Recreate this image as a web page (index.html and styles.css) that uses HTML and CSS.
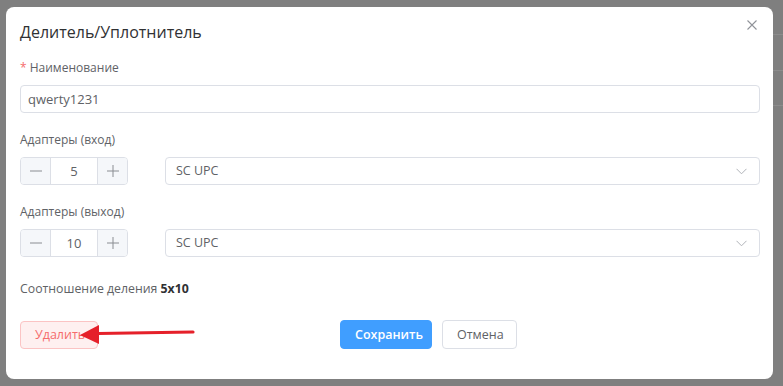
FILE: index.html
```html
<!DOCTYPE html>
<html lang="ru">
<head>
<meta charset="utf-8">
<link rel="stylesheet" href="styles.css">
</head>
<body>
<div class="backdrop">
  <div class="bg-line l1"></div>
  <div class="bg-line l2"></div>
  <div class="bg-line l3"></div>
  <div class="modal">
    <div class="header">
      <span class="title">Делитель/Уплотнитель</span>
      <svg class="close" width="10" height="10" viewBox="0 0 10 10"><path d="M0.5 0.5L9.5 9.5M9.5 0.5L0.5 9.5" stroke="#909399" stroke-width="1.1"/></svg>
    </div>
    <div class="field">
      <div class="label"><span class="req">*</span> Наименование</div>
      <div class="input">qwerty1231</div>
    </div>
    <div class="field">
      <div class="label">Адаптеры (вход)</div>
      <div class="row">
        <div class="number">
          <span class="step minus"><svg width="12" height="12" viewBox="0 0 12 12"><path d="M0 6H12" stroke="#8a8d92" stroke-width="1"/></svg></span>
          <span class="value">5</span>
          <span class="step plus"><svg width="12" height="12" viewBox="0 0 12 12"><path d="M0 6H12M6 0V12" stroke="#8a8d92" stroke-width="1"/></svg></span>
        </div>
        <div class="select">SC UPC
          <svg class="arrow" width="11" height="7" viewBox="0 0 11 7"><path d="M0.5 0.8L5.5 5.8L10.5 0.8" fill="none" stroke="#b0b3b8" stroke-width="1"/></svg>
        </div>
      </div>
    </div>
    <div class="field">
      <div class="label">Адаптеры (выход)</div>
      <div class="row">
        <div class="number">
          <span class="step minus"><svg width="12" height="12" viewBox="0 0 12 12"><path d="M0 6H12" stroke="#8a8d92" stroke-width="1"/></svg></span>
          <span class="value">10</span>
          <span class="step plus"><svg width="12" height="12" viewBox="0 0 12 12"><path d="M0 6H12M6 0V12" stroke="#8a8d92" stroke-width="1"/></svg></span>
        </div>
        <div class="select">SC UPC
          <svg class="arrow" width="11" height="7" viewBox="0 0 11 7"><path d="M0.5 0.8L5.5 5.8L10.5 0.8" fill="none" stroke="#b0b3b8" stroke-width="1"/></svg>
        </div>
      </div>
    </div>
    <div class="ratio">Соотношение деления <b>5x10</b></div>
    <div class="footer">
      <button class="btn danger">Удалить</button>
      <div class="actions">
        <button class="btn primary">Сохранить</button>
        <button class="btn plain">Отмена</button>
      </div>
    </div>
    <svg class="annot" width="130" height="30" viewBox="0 0 130 30"><path d="M20 13.5L115 12" stroke="#e5202a" stroke-width="3.2" stroke-linecap="round"/><path d="M2 15L21 5L21 24Z" fill="#e5202a"/></svg>
  </div>
</div>
</body>
</html>
```
FILE: styles.css
```css
html, body {
  margin: 0;
  padding: 0;
}
body {
  background: #7f7f7f;
  font-family: "Open Sans", "Noto Sans", sans-serif;
  color: #606266;
}
.backdrop {
  position: relative;
  width: 783px;
  height: 386px;
  padding: 7px 10px 7px 6px;
  box-sizing: border-box;
}
.bg-line {
  position: absolute;
  right: 0;
  width: 10px;
  height: 1px;
  background: #8c8c8c;
}
.l1 { top: 34px; }
.l2 { top: 70px; }
.l3 { top: 105px; }
.modal {
  position: relative;
  width: 767px;
  height: 372px;
  box-sizing: border-box;
  background: #fff;
  border-radius: 8px;
  padding: 15px 13px 0 14px;
}
.header {
  display: flex;
  justify-content: space-between;
  align-items: flex-start;
  height: 20px;
  margin-bottom: 16px;
}
.title {
  font-size: 16px;
  line-height: 20px;
  color: #303133;
}
.close {
  margin-top: -2px;
  margin-right: 3px;
}
.field {
  margin-bottom: 17px;
}
.label {
  font-size: 12px;
  line-height: 20px;
  margin-bottom: 7px;
  color: #606266;
}
.req {
  color: #f56c6c;
}
.input {
  height: 28px;
  box-sizing: border-box;
  border: 1px solid #dcdfe6;
  border-radius: 4px;
  padding: 0 7px;
  font-size: 13px;
  line-height: 26px;
  color: #606266;
}
.row {
  display: flex;
  gap: 37px;
}
.number {
  width: 108px;
  height: 28px;
  box-sizing: border-box;
  border: 1px solid #dcdfe6;
  border-radius: 4px;
  display: flex;
  overflow: hidden;
}
.step {
  width: 29px;
  background: #f5f7fa;
  display: flex;
  align-items: center;
  justify-content: center;
}
.minus { border-right: 1px solid #dcdfe6; }
.plus { border-left: 1px solid #dcdfe6; }
.value {
  flex: 1;
  text-align: center;
  font-size: 13px;
  line-height: 26px;
  color: #606266;
}
.select {
  flex: 1;
  height: 28px;
  box-sizing: border-box;
  border: 1px solid #dcdfe6;
  border-radius: 4px;
  padding: 0 10px;
  font-size: 12.5px;
  line-height: 26px;
  color: #606266;
  display: flex;
  justify-content: space-between;
  align-items: center;
}
.arrow {
  margin-right: 2px;
}
.ratio {
  margin-top: 22px;
  font-size: 12.3px;
  line-height: 20px;
  color: #606266;
}
.ratio b {
  color: #303133;
  font-weight: 700;
}
.footer {
  display: flex;
  align-items: center;
  margin-top: 21px;
}
.actions {
  display: flex;
  gap: 10px;
  margin-left: 242px;
}
.btn {
  height: 29px;
  box-sizing: border-box;
  border-radius: 4px;
  font-family: inherit;
  font-size: 12.5px;
  padding: 0 14px;
  cursor: pointer;
}
.danger {
  height: 28px;
  width: 78px;
  background: #fef0f0;
  border: 1px solid #fbc4c4;
  color: #f56c6c;
}
.primary {
  width: 92px;
  background: #409eff;
  border: 1px solid #409eff;
  color: #fff;
  font-weight: 600;
}
.plain {
  width: 75px;
  background: #fff;
  border: 1px solid #dcdfe6;
  color: #606266;
}
.annot {
  position: absolute;
  left: 72px;
  top: 313px;
}
```
